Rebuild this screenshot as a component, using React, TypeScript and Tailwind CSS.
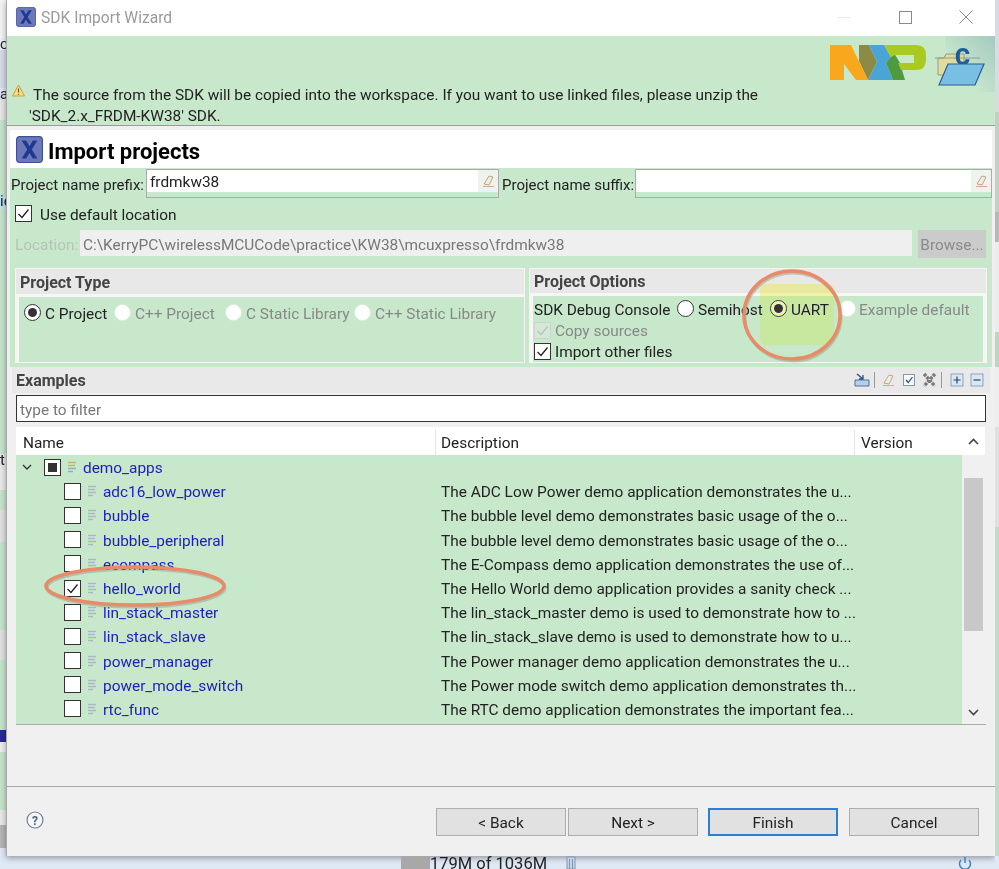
import React from "react";

const font = "font-['Roboto','Liberation_Sans',sans-serif]";

const rows = [
  { name: "adc16_low_power", desc: "The ADC Low Power demo application demonstrates the u..." },
  { name: "bubble", desc: "The bubble level demo demonstrates basic usage of the o..." },
  { name: "bubble_peripheral", desc: "The bubble level demo demonstrates basic usage of the o..." },
  { name: "ecompass", desc: "The E-Compass demo application demonstrates the use of..." },
  { name: "hello_world", desc: "The Hello World demo application provides a sanity check ...", checked: true },
  { name: "lin_stack_master", desc: "The lin_stack_master demo is used to demonstrate how to ..." },
  { name: "lin_stack_slave", desc: "The lin_stack_slave demo is used to demonstrate how to u..." },
  { name: "power_manager", desc: "The Power manager demo application demonstrates the u..." },
  { name: "power_mode_switch", desc: "The Power mode switch demo application demonstrates th..." },
  { name: "rtc_func", desc: "The RTC demo application demonstrates the important fea..." },
];

const leftStrip = [
  { h: "h-[38px]", c: "bg-[#f4f4f4]", t: "" },
  { h: "h-[12px]", c: "bg-[#eef1f4]", t: "c" },
  { h: "h-[38px]", c: "bg-[#d5dbe6]", t: "" },
  { h: "h-[14px]", c: "bg-[#dfe5ef]", t: "a" },
  { h: "h-[18px]", c: "bg-[#e6e6e6]", t: "" },
  { h: "h-[75px]", c: "bg-[#c5e5cb]", t: "" },
  { h: "h-[14px]", c: "bg-[#bfe6ee]", t: "ie" },
  { h: "h-[245px]", c: "bg-[#c5e5cb]", t: "" },
  { h: "h-[36px]", c: "bg-[#e8e8e8]", t: "t" },
  { h: "h-[20px]", c: "bg-[#c5e5cb]", t: "" },
  { h: "h-[32px]", c: "bg-[#e0e0e0]", t: "" },
  { h: "h-[88px]", c: "bg-[#c5e5cb]", t: "" },
  { h: "h-[30px]", c: "bg-[#e0e0e0]", t: "" },
  { h: "h-[70px]", c: "bg-[#c5e5cb]", t: "" },
  { h: "h-[12px]", c: "bg-[#2a2a9a]", t: "" },
  { h: "h-[10px]", c: "bg-[#eeeeee]", t: "" },
  { h: "h-[58px]", c: "bg-[#c5e5cb]", t: "" },
  { h: "h-[15px]", c: "bg-[#e8e8e8]", t: "" },
  { h: "h-[23px]", c: "bg-[#b5b5b5]", t: "" },
  { h: "h-[21px]", c: "bg-[#dfe8f5]", t: "" },
];

const rightStrip = [
  { h: "h-[112px]", c: "bg-[#d8dce0]" },
  { h: "h-[100px]", c: "bg-[#c2cfc4]" },
  { h: "h-[30px]", c: "bg-[#b8b8b8]" },
  { h: "h-[90px]", c: "bg-[#ececec]" },
  { h: "h-[35px]", c: "bg-[#b9d8bf]" },
  { h: "h-[60px]", c: "bg-[#eeeeee]" },
  { h: "h-[100px]", c: "bg-[#e0e0e0]" },
  { h: "h-[329px]", c: "bg-[#bfdcc5]" },
  { h: "h-[13px]", c: "bg-[#dfe8f5]" },
];

function XLogo({ size }: { size: number }) {
  return (
    <svg width={size} height={size} viewBox="0 0 24 24" className="shrink-0">
      <rect x="0.5" y="0.5" width="23" height="23" rx="3" fill="#6d78b8" stroke="#3c4f9a" />
      <path d="M5 4 L9 4 L12 9 L15 4 L19 4 L14 12 L19 20 L15 20 L12 15 L9 20 L5 20 L10 12 Z" fill="#1c3a94" />
    </svg>
  );
}

function Eraser() {
  return (
    <svg width="14" height="14" viewBox="0 0 14 14">
      <path d="M3 10 L8 2 L12 3 L8 11 Z" fill="#f3ece0" stroke="#b9a58f" />
      <path d="M2 12.5 H13" stroke="#d8a890" />
    </svg>
  );
}

function Check({ disabled }: { disabled?: boolean }) {
  return (
    <svg width="13" height="13" viewBox="0 0 13 13">
      <path d="M1.5 7 L5 10.5 L11.5 2.5" fill="none" stroke={disabled ? "#b5c9b8" : "#222"} strokeWidth="1.3" />
    </svg>
  );
}

function Box({ checked, disabled }: { checked?: boolean; disabled?: boolean }) {
  return (
    <span
      className={`flex h-[17px] w-[17px] shrink-0 items-center justify-center border ${
        disabled ? "border-[#c9d6cb] bg-[#d6e6d8]" : "border-[#333] bg-white"
      }`}
    >
      {checked && <Check disabled={disabled} />}
    </span>
  );
}

function Radio({ on, disabled }: { on?: boolean; disabled?: boolean }) {
  return (
    <span
      className={`flex h-[17px] w-[17px] shrink-0 items-center justify-center rounded-full border ${
        disabled ? "border-[#dcebdd] bg-white" : "border-[#333] bg-white"
      }`}
    >
      {on && <span className="h-[9px] w-[9px] rounded-full bg-[#333]" />}
    </span>
  );
}

function FileLines({ tint }: { tint?: boolean }) {
  return (
    <svg width="10" height="12" viewBox="0 0 10 12" className="shrink-0">
      <path d="M1 1.5 H9" stroke={tint ? "#c9b45c" : "#a9b6c4"} strokeWidth="1.4" />
      <path d="M1 4.5 H8" stroke={tint ? "#c9b45c" : "#a9b6c4"} strokeWidth="1.4" />
      <path d="M1 7.5 H9" stroke={tint ? "#8fa8d0" : "#a9b6c4"} strokeWidth="1.4" />
      <path d="M1 10.5 H6" stroke={tint ? "#8fa8d0" : "#a9b6c4"} strokeWidth="1.4" />
    </svg>
  );
}

function NxpLogo() {
  return (
    <svg width="97" height="36" viewBox="0 0 97 36" className="shrink-0">
      <path d="M29 0 H39 L47 17 L38 35 L29 16 Z" fill="#8d8a45" />
      <path d="M0 0 H21 L38 35 H26 L14 19 V35 H0 Z" fill="#f9a81c" />
      <path d="M39 0 H54 L61 12 L56 18 L63 35 H38 L47 17 Z" fill="#4ba4d6" />
      <path d="M56 18 L64 8 L70 18 L75 35 H63 Z" fill="#4f9a3e" />
      <path d="M54 0 H86 Q96 0 96 10 V15 Q96 25 86 25 H71 L68 18 H84 V10 H65 L61 12 Z" fill="#a9cb1f" />
    </svg>
  );
}

function FolderIcon() {
  return (
    <svg width="52" height="42" viewBox="0 0 52 42" className="shrink-0">
      <path d="M4 13 H10 L12 9 H30 V30 H4 Z" fill="#e0dca0" stroke="#9a9a78" />
      <path d="M1 13 H46" stroke="#9a9a8a" />
      <text x="21" y="20" fontSize="23" fontWeight="900" fill="#1f5c9a" fontFamily="Roboto, sans-serif">C</text>
      <path d="M14 19 H50 L41 40 H5 Z" fill="#79bfe4" stroke="#2c5f94" strokeWidth="1.2" />
    </svg>
  );
}

function Toolbar() {
  return (
    <div className="flex items-center">
      <svg width="16" height="14" viewBox="0 0 16 14">
        <path d="M1 7 H15 V13 H1 Z" fill="#b8cfe6" stroke="#4f739c" />
        <path d="M3 1 L9 6 M9 2 V6 H5" fill="none" stroke="#28537f" strokeWidth="1.3" />
      </svg>
      <span className="ml-[4px] h-[16px] w-px bg-[#9a9a9a]" />
      <span className="ml-[6px]"><Eraser /></span>
      <svg width="14" height="14" viewBox="0 0 14 14" className="ml-[7px]">
        <rect x="1.5" y="1.5" width="11" height="11" fill="#f6f8fb" stroke="#8797a8" />
        <path d="M4 7 L6.3 9.5 L10.5 4" fill="none" stroke="#2a4c6e" strokeWidth="1.2" />
      </svg>
      <svg width="15" height="16" viewBox="0 0 15 16" className="ml-[6px]">
        <path d="M2 2 L13 14 M13 2 L2 14" stroke="#7b7b7b" strokeWidth="3.4" strokeDasharray="3 1" />
      </svg>
      <span className="ml-[4px] h-[16px] w-px bg-[#9a9a9a]" />
      <svg width="14" height="14" viewBox="0 0 14 14" className="ml-[8px]">
        <rect x="1" y="1" width="12" height="12" fill="#dbe6f3" stroke="#87a3c4" />
        <path d="M3.5 7 H10.5 M7 3.5 V10.5" stroke="#26476e" strokeWidth="1.2" />
      </svg>
      <svg width="14" height="14" viewBox="0 0 14 14" className="ml-[6px]">
        <rect x="1" y="1" width="12" height="12" fill="#dbe6f3" stroke="#87a3c4" />
        <path d="M3.5 7 H10.5" stroke="#26476e" strokeWidth="1.2" />
      </svg>
    </div>
  );
}

function WizardButton({ label, active }: { label: string; active?: boolean }) {
  return (
    <button
      className={`flex h-[28px] w-[130px] items-center justify-center bg-[#e1e1e1] pt-[2px] text-[#222] ${
        active ? "border-2 border-[#2f7fd0]" : "border border-[#adadad]"
      }`}
    >
      {label}
    </button>
  );
}

export default function App() {
  return (
    <div className={`${font} relative flex h-[869px] w-[999px] overflow-hidden bg-[#dfe8f5] text-[15.4px] leading-[20px] text-[#222]`}>
      {/* slivers of the IDE behind the dialog */}
      <div className="flex w-[6px] shrink-0 flex-col overflow-hidden text-[15px] leading-[12px] text-[#223]">
        {leftStrip.map((s, i) => (
          <div key={i} className={`${s.h} ${s.c} whitespace-nowrap`}>
            {s.t}
          </div>
        ))}
      </div>

      <div className="flex h-[856px] w-[989px] shrink-0 flex-col border-l border-[#a8a8a8] bg-[#f0f0f0] shadow-[0_2px_6px_rgba(0,0,0,0.35)]">
        {/* title bar */}
        <div className="flex h-[36px] items-center bg-white pl-[9px] pb-[2px]">
          <XLogo size={20} />
          <span className="ml-[5px] pt-[2px] text-[15.6px] text-[#9a9a9a]">SDK Import Wizard</span>
          <div className="ml-auto flex items-center pr-[22px]">
            <span className="h-px w-[12px] bg-[#e8e8e8]" />
            <span className="ml-[49px] h-[13px] w-[13px] border border-[#8a8a8a]" />
            <svg width="14" height="14" viewBox="0 0 14 14" className="ml-[47px]">
              <path d="M0.5 0.5 L13.5 13.5 M13.5 0.5 L0.5 13.5" stroke="#8a8a8a" />
            </svg>
          </div>
        </div>

        {/* banner */}
        <div className="relative h-[90px] border-b border-[#9a9a9a] bg-[#c8e8cc] pl-[22px]">
          <div className="absolute right-0 top-0 h-[56px] w-[50px] bg-linear-to-bl from-[#a5c9c2] to-transparent to-70%" />
          <div className="absolute left-[5px] top-[48px]">
            <svg width="13" height="13" viewBox="0 0 13 13">
              <path d="M6.5 1 L12.5 12 H0.5 Z" fill="#f5dc8c" stroke="#c9a13c" strokeLinejoin="round" />
              <path d="M6.5 4.5 V8.5 M6.5 9.7 V10.8" stroke="#7a5c14" strokeWidth="1.2" />
            </svg>
          </div>
          <div className="absolute right-[9px] top-[9px] flex items-start gap-[7px]">
            <NxpLogo />
            <FolderIcon />
          </div>
          <p className="pt-[49px] pl-[4px] whitespace-nowrap">
            The source from the SDK will be copied into the workspace. If you want to use linked files, please unzip the
          </p>
          <p className="pt-[1px] whitespace-nowrap">'SDK_2.x_FRDM-KW38' SDK.</p>
        </div>

        {/* page header */}
        <div className="mx-[3px] mt-[4px] flex h-[38px] items-center bg-white pl-[6px]">
          <XLogo size={27} />
          <h1 className="ml-[5px] pt-[6px] text-[22px] font-bold text-black">Import projects</h1>
        </div>

        {/* project form */}
        <div className="mx-[3px] flex h-[199px] flex-col bg-[#c8e8cc]">
          <div className="mt-[1px] flex h-[29px]">
            <span className="ml-[1px] w-[135px] whitespace-nowrap pt-[6px] text-[15px]">Project name prefix:</span>
            <div className="flex w-[353px] border border-[#aaa] bg-[#c8e8cc]">
              <div className="h-[22px] flex-1 bg-white pl-[3px] pt-[2px]">frdmkw38</div>
              <div className="flex h-[22px] w-[20px] items-center justify-center bg-[#eef3ee]"><Eraser /></div>
            </div>
            <span className="ml-[3px] w-[133px] whitespace-nowrap pt-[6px] text-[15px]">Project name suffix:</span>
            <div className="flex flex-1 border border-[#aaa] bg-[#c8e8cc]">
              <div className="h-[22px] flex-1 bg-white" />
              <div className="flex h-[22px] w-[20px] items-center justify-center bg-[#eef3ee]"><Eraser /></div>
            </div>
          </div>
          <div className="ml-[5px] mt-[7px] flex h-[17px] items-center gap-[8px]">
            <Box checked />
            <span className="pt-[3px]">Use default location</span>
          </div>
          <div className="mt-[8px] flex h-[28px] items-start pl-[5px]">
            <span className="w-[65px] pt-[5px] text-[#b5c5b8]">Location:</span>
            <div className="flex h-[26px] w-[832px] items-center bg-[#efefef] pl-[3px] pt-[3px] text-[#777]">
              C:\KerryPC\wirelessMCUCode\practice\KW38\mcuxpresso\frdmkw38
            </div>
            <div className="ml-[6px] flex h-[28px] w-[68px] items-center justify-center bg-[#cbcbcb] pt-[2px] text-[#8a8a8a]">Browse...</div>
          </div>

          <div className="mt-[10px] flex gap-[4px] px-[5px]">
            <section className="flex h-[95px] w-[510px] flex-col border border-[#f4f4f4] bg-[#f6f6f6]">
              <div className="flex h-[25px] items-center bg-[#e8e8e8] pl-[4px] pt-[2px] text-[16px] font-bold text-[#444]">Project Type</div>
              <div className="ml-[3px] mt-[3px] flex flex-1 items-start bg-[#c8e8cc] pl-[5px] pt-[7px]">
                <Radio on />
                <span className="ml-[4px] w-[69px]">C Project</span>
                <Radio disabled />
                <span className="ml-[4px] w-[90px] text-[#888]">C++ Project</span>
                <Radio disabled />
                <span className="ml-[4px] w-[108px] text-[#888]">C Static Library</span>
                <Radio disabled />
                <span className="ml-[4px] text-[#888]">C++ Static Library</span>
              </div>
            </section>
            <section className="flex h-[95px] flex-1 flex-col border border-[#f4f4f4] bg-[#f6f6f6]">
              <div className="flex h-[25px] items-center bg-[#e8e8e8] pl-[4px] pt-[2px] text-[16px] font-bold text-[#444]">Project Options</div>
              <div className="mx-[3px] mt-[3px] flex flex-1 flex-col bg-[#c8e8cc] pl-[1px]">
                <div className="flex h-[24px] items-center">
                  <span className="w-[143px] whitespace-nowrap pt-[3px]">SDK Debug Console</span>
                  <Radio />
                  <span className="ml-[4px] w-[72px] pt-[3px]">Semihost</span>
                  <Radio on />
                  <span className="ml-[4px] w-[48px] pt-[3px]">UART</span>
                  <Radio disabled />
                  <span className="ml-[3px] pt-[3px] text-[#888]">Example default</span>
                </div>
                <div className="flex h-[21px] items-center gap-[4px]">
                  <Box checked disabled />
                  <span className="text-[#888]">Copy sources</span>
                </div>
                <div className="flex h-[21px] items-center gap-[4px]">
                  <Box checked />
                  <span className="pt-[1px]">Import other files</span>
                </div>
              </div>
            </section>
          </div>
        </div>

        {/* examples */}
        <div className="mx-[5px] flex h-[26px] items-center justify-between bg-[#e9e9e9] pl-[4px] pr-[6px]">
          <span className="pt-[2px] text-[16px] font-bold text-[#444]">Examples</span>
          <Toolbar />
        </div>
        <div className="ml-[9px] mr-[9px] mt-[2px] flex h-[27px] items-center border border-[#333] bg-white pl-[3px] pt-[2px] text-[#777]">type to filter</div>
        <div className="ml-[9px] mr-[9px] mt-[5px] flex h-[298px] border-b border-[#aaa] bg-[#f0f0f0]">
          <div className="flex w-[946px] flex-col">
            <div className="flex h-[28px] items-center bg-white pt-[3px] text-[#222]">
              <span className="w-[420px] border-r border-[#e6e6e6] pl-[7px] leading-[26px]">Name</span>
              <span className="w-[419px] border-r border-[#e6e6e6] pl-[5px] leading-[26px]">Description</span>
              <span className="pl-[6px]">Version</span>
            </div>
            <div className="flex flex-1 flex-col overflow-hidden bg-[#c8e8cc] text-[#1c1cc0]">
              <div className="flex h-[24.2px] shrink-0 items-center">
                <svg width="10" height="6" viewBox="0 0 10 6" className="ml-[6px]">
                  <path d="M1 1 L5 5 L9 1" fill="none" stroke="#333" strokeWidth="1.3" />
                </svg>
                <span className="ml-[12px] flex h-[17px] w-[17px] items-center justify-center border border-[#333] bg-white">
                  <span className="h-[9px] w-[9px] bg-[#333]" />
                </span>
                <span className="ml-[6px]"><FileLines tint /></span>
                <span className="ml-[6px] pt-[2px]">demo_apps</span>
              </div>
              {rows.map((r) => (
                <div key={r.name} className="flex h-[24.2px] shrink-0 items-center">
                  <div className="flex w-[420px] items-center pl-[48px]">
                    <Box checked={r.checked} />
                    <span className="ml-[6px]"><FileLines /></span>
                    <span className="ml-[6px] pt-[2px]">{r.name}</span>
                  </div>
                  <span className="pl-[5px] pt-[2px] whitespace-nowrap text-[#222]">{r.desc}</span>
                </div>
              ))}
            </div>
          </div>
          {/* scrollbar */}
          <div className="flex w-[23px] flex-col items-center bg-[#f0f0f0]">
            <div className="flex h-[28px] w-full items-center justify-center bg-white">
              <svg width="11" height="7" viewBox="0 0 11 7"><path d="M1 6 L5.5 1.5 L10 6" fill="none" stroke="#444" strokeWidth="1.6" /></svg>
            </div>
            <div className="mt-[23px] h-[153px] w-[19px] bg-[#c8c8c8]" />
            <svg width="11" height="7" viewBox="0 0 11 7" className="mt-[78px]"><path d="M1 1 L5.5 5.5 L10 1" fill="none" stroke="#444" strokeWidth="1.6" /></svg>
          </div>
        </div>

        {/* footer */}
        <div className="mt-[61px] border-t border-[#a8a8a8]" />
        <div className="flex flex-1 items-start pl-[19px] pt-[21px]">
          <svg width="18" height="18" viewBox="0 0 18 18" className="mt-[3px]">
            <circle cx="9" cy="9" r="8" fill="#f4f6f9" stroke="#6f7f96" strokeWidth="1.2" />
            <text x="9" y="13.5" textAnchor="middle" fontSize="12" fontWeight="700" fill="#4f5f78" fontFamily="Roboto, sans-serif">?</text>
          </svg>
          <div className="ml-auto flex pr-[16px]">
            <WizardButton label="< Back" />
            <span className="w-[2px]" />
            <WizardButton label="Next >" />
            <span className="w-[10px]" />
            <WizardButton label="Finish" active />
            <span className="w-[11px]" />
            <WizardButton label="Cancel" />
          </div>
        </div>
      </div>

      <div className="flex w-[4px] shrink-0 flex-col">
        {rightStrip.map((s, i) => (
          <div key={i} className={`${s.h} ${s.c}`} />
        ))}
      </div>

      {/* status bar of the IDE showing below the dialog */}
      <div className="absolute bottom-0 left-[401px] flex h-[13px] items-start overflow-hidden text-[16.5px] leading-[16px] text-[#222]">
        <span className="h-[13px] w-[29px] bg-[#a8a8a8]" />
        <span className="w-[135px] whitespace-nowrap">179M of 1036M</span>
        <svg width="12" height="13" viewBox="0 0 12 13">
          <path d="M2 1 H10 V13 H2 Z M4.5 3 V13 M7.5 3 V13" fill="#c5d5e6" stroke="#7f97b3" />
        </svg>
      </div>
      <div className="absolute bottom-0 left-[958px]">
        <svg width="14" height="12" viewBox="0 0 14 12">
          <path d="M3 3 A5.5 5.5 0 1 0 11 3 M7 0 V6" fill="none" stroke="#3b83c4" strokeWidth="1.5" />
        </svg>
      </div>

      {/* hand-drawn annotations on top of the screenshot */}
      <div className="absolute left-[760px] top-[284px] h-[61px] w-[74px] rounded-[6px] bg-[#f0f4a0] mix-blend-darken" />
      <svg width="999" height="869" viewBox="0 0 999 869" className="pointer-events-none absolute left-0 top-0">
        <ellipse cx="792" cy="315" rx="48" ry="44" fill="none" stroke="#8a9a88" strokeWidth="3" opacity="0.45" transform="translate(1 2)" />
        <ellipse cx="792" cy="315" rx="48" ry="44" fill="none" stroke="#e98a68" strokeWidth="3.5" />
        <ellipse cx="135" cy="586" rx="89" ry="19" fill="none" stroke="#8a9a88" strokeWidth="3" opacity="0.45" transform="translate(1 2)" />
        <ellipse cx="135" cy="586" rx="89" ry="19" fill="none" stroke="#e98a68" strokeWidth="3.5" />
      </svg>
    </div>
  );
}
